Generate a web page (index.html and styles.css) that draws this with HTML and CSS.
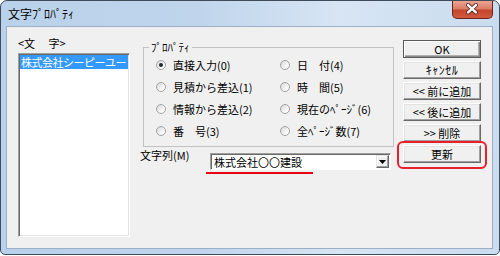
FILE: index.html
```html
<!DOCTYPE html>
<html lang="ja">
<head>
<meta charset="utf-8">
<link rel="stylesheet" href="styles.css">
</head>
<body>
<div class="window">
  <div class="titlebar">
    <span class="title">文字ﾌﾟﾛﾊﾟﾃｨ</span>
    <div class="close">
      <svg width="41" height="18" viewBox="0 0 41 18">
        <path d="M16.5 5 L24.5 12.5 M24.5 5 L16.5 12.5" stroke="#5a2a22" stroke-width="4.2" stroke-linecap="round" fill="none"/>
        <path d="M16.5 5 L24.5 12.5 M24.5 5 L16.5 12.5" stroke="#ffffff" stroke-width="2.4" stroke-linecap="round" fill="none"/>
      </svg>
    </div>
  </div>
  <div class="client">
    <div class="left">
      <div class="list-label">&lt;文　 字&gt;</div>
      <div class="listbox">
        <div class="item selected">株式会社シーピーユー</div>
      </div>
    </div>
    <div class="middle">
      <fieldset class="group">
        <legend>ﾌﾟﾛﾊﾟﾃｨ</legend>
        <div class="radios">
          <div class="radio"><span class="dot checked"></span><span>直接入力(0)</span></div>
          <div class="radio"><span class="dot"></span><span>見積から差込(1)</span></div>
          <div class="radio"><span class="dot"></span><span>情報から差込(2)</span></div>
          <div class="radio"><span class="dot"></span><span>番　号(3)</span></div>
          <div class="radio"><span class="dot"></span><span>日　付(4)</span></div>
          <div class="radio"><span class="dot"></span><span>時　間(5)</span></div>
          <div class="radio"><span class="dot"></span><span>現在のﾍﾟｰｼﾞ(6)</span></div>
          <div class="radio"><span class="dot"></span><span>全ﾍﾟｰｼﾞ数(7)</span></div>
        </div>
      </fieldset>
      <div class="string-row">
        <span class="string-label">文字列(M)</span>
        <div class="combo">
          <span class="combo-text">株式会社〇〇建設</span>
          <span class="combo-btn">
            <svg width="7" height="4" viewBox="0 0 7 4"><polygon points="0,0 7,0 3.5,4" fill="#000"/></svg>
          </span>
        </div>
      </div>
      <div class="underline"></div>
    </div>
    <div class="buttons">
      <button class="btn default">OK</button>
      <button class="btn kana">ｷｬﾝｾﾙ</button>
      <button class="btn">&lt;&lt; 前に追加</button>
      <button class="btn">&lt;&lt; 後に追加</button>
      <button class="btn">&gt;&gt; 削除</button>
      <div class="highlight"><button class="btn">更新</button></div>
    </div>
  </div>
</div>
</body>
</html>
```

FILE: styles.css
```css
* { box-sizing: border-box; }
html, body { margin: 0; padding: 0; background: #ffffff; }
body {
  width: 500px;
  height: 256px;
  font-family: "Noto Sans CJK JP", "Noto Sans", sans-serif;
  font-size: 11px;
  line-height: 14px;
  color: #000;
}
.window {
  width: 500px;
  height: 255px;
  border: 1px solid #3f4b59;
  border-radius: 7px 7px 5px 5px;
  background: linear-gradient(to right, #b9d1ea 0%, #c0d5ec 40%, #d7e5f4 68%, #cadcef 100%);
  display: flex;
  flex-direction: column;
  overflow: hidden;
}
.titlebar {
  height: 25px;
  flex: none;
  display: flex;
  align-items: center;
  padding-left: 7px;
}
.title { font-size: 12px; }
.close {
  margin-left: auto;
  margin-right: 6px;
  align-self: flex-start;
  width: 41px;
  height: 18px;
  border: 1px solid #6b2419;
  border-top: none;
  border-radius: 0 0 5px 5px;
  background: linear-gradient(#e9a593 0%, #dc7d68 45%, #c6442d 55%, #cf5b40 100%);
  display: flex;
}
.close svg { display: block; margin: -1px 0 0 -1px; }
.client {
  flex: 1;
  margin: 0 6px 5px 5px;
  border: 1px solid #9bb0c7;
  background: #f0f0f0;
  display: flex;
  align-items: flex-start;
  padding-left: 11px;
}
.left { width: 112px; padding-top: 9px; }
.list-label { white-space: pre; }
.listbox {
  margin-top: 3px;
  height: 184px;
  background: #fff;
  border: 1px solid;
  border-color: #a0a0a0 #ffffff #ffffff #a0a0a0;
  box-shadow: inset 1px 1px #696969, inset -1px -1px #e3e3e3;
  padding: 1px 1px 0 1px;
  overflow: hidden;
}
.item { height: 14px; line-height: 14px; white-space: nowrap; padding-left: 1px; letter-spacing: -0.5px; }
.item.selected { background: #3399ff; color: #fff; }
.middle { width: 254px; margin-left: 10px; padding-top: 13px; }
.group {
  margin: 0 0 0 3px;
  padding: 0;
  min-width: 0;
  border: 1px solid #c2c2c2;
}
.group legend { margin-left: 5px; padding: 0 2px; line-height: 14px; }
.radios {
  display: grid;
  grid-template-columns: 124px auto;
  grid-template-rows: repeat(4, 22px);
  grid-auto-flow: column;
  padding: 0 0 4px 12px;
}
.radio { display: flex; align-items: center; gap: 7px; white-space: nowrap; }
.dot {
  width: 10px;
  height: 10px;
  border-radius: 50%;
  border: 1px solid #a2a2a2;
  background: linear-gradient(135deg, #d6d6d6, #fbfbfb 70%);
  display: flex;
  align-items: center;
  justify-content: center;
  flex: none;
}
.dot.checked::after {
  content: "";
  width: 4px;
  height: 4px;
  border-radius: 50%;
  background: #1f2a33;
}
.string-row { display: flex; align-items: flex-start; margin-top: 1px; }
.string-label { width: 70px; }
.combo {
  margin-top: 5px;
  width: 181px;
  height: 17px;
  background: #fff;
  border: 1px solid;
  border-color: #a0a0a0 #ffffff #ffffff #a0a0a0;
  box-shadow: inset 1px 1px #696969;
  display: flex;
  align-items: center;
  padding-left: 3px;
}
.combo-text { white-space: nowrap; }
.combo-btn {
  margin-left: auto;
  margin-right: 1px;
  width: 13px;
  height: 13px;
  background: #f0f0f0;
  border: 1px solid;
  border-color: #e3e3e3 #696969 #696969 #e3e3e3;
  box-shadow: inset -1px -1px #a0a0a0, inset 1px 1px #fff;
  display: flex;
  align-items: center;
  justify-content: center;
}
.combo-btn svg { display: block; }
.underline { width: 107px; height: 2px; background: #e60012; margin: 2px 0 0 66px; }
.buttons {
  width: 78px;
  margin-left: 9px;
  padding-top: 13px;
  display: flex;
  flex-direction: column;
  gap: 3px;
}
.btn {
  width: 78px;
  height: 18px;
  padding: 0;
  margin: 0;
  font: inherit;
  color: #000;
  background: #f0f0f0;
  border: 1px solid;
  border-color: #ffffff #696969 #696969 #ffffff;
  box-shadow: inset -1px -1px #a0a0a0, inset 1px 1px #e3e3e3;
  display: flex;
  align-items: center;
  justify-content: center;
  white-space: nowrap;
}
.btn.kana { font-size: 12px; letter-spacing: 0.5px; }
.btn.default {
  border: 1px solid #5a5a5a;
  box-shadow: inset 1px 1px #ffffff, inset -1px -1px #8a8a8a, inset -2px -2px #b0b0b0;
}
.highlight {
  margin: -4px -6px 0 -6px;
  padding: 2px 4px 4px 4px;
  border: 2px solid #e8202a;
  border-radius: 6px;
}
```
